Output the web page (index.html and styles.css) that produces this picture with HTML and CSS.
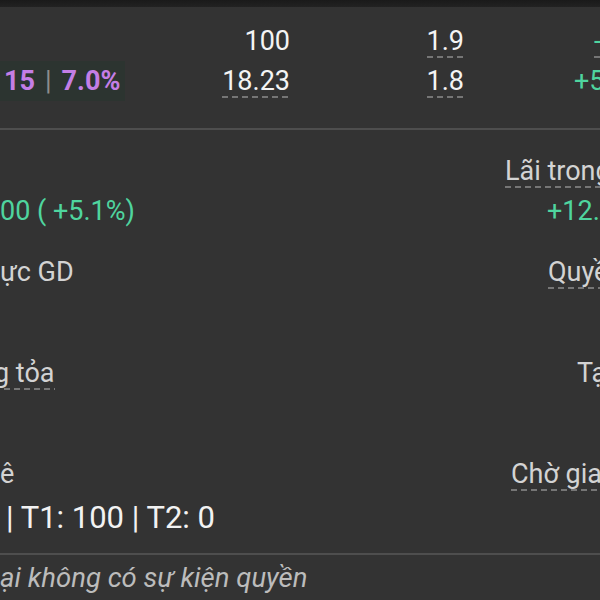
FILE: index.html
```html
<!DOCTYPE html>
<html lang="vi">
<head>
<meta charset="utf-8">
<title>Quote</title>
<link rel="stylesheet" href="styles.css">
</head>
<body>
<div class="statusbar"></div>
<section class="quote">
  <div class="cell"></div>
  <div class="cell num">100</div>
  <div class="cell num"><span class="dash">1.9</span></div>
  <div class="cell chg off-q1"><span class="dash">-</span></div>

  <div class="cell hl"><span>15</span><span class="bar">|</span><span>7.0%</span></div>
  <div class="cell num"><span class="dash">18.23</span></div>
  <div class="cell num"><span class="dash">1.8</span></div>
  <div class="cell chg off-q2">+5.2%</div>
</section>

<section class="stats">
  <div class="stat">
    <div class="lbl"></div>
    <div class="lbl off-lai"><span class="dash">Lãi trong ngày</span></div>
    <div class="val green">00 ( +5.1%)</div>
    <div class="val green off-pnl">+12.000</div>
  </div>
  <div class="stat">
    <div class="lbl">ực GD</div>
    <div class="lbl off-quyen"><span class="dash">Quyền</span></div>
    <div class="val"></div>
    <div class="val"></div>
  </div>
  <div class="stat">
    <div class="lbl cut"><span class="dash">g tỏa</span></div>
    <div class="lbl off-tam">Tạm giữ</div>
    <div class="val"></div>
    <div class="val"></div>
  </div>
  <div class="stat last">
    <div class="lbl">ê</div>
    <div class="lbl off-cho"><span class="dash">Chờ giao</span></div>
    <div class="val big">| T1: 100 | T2: 0</div>
    <div class="val"></div>
  </div>
</section>

<p class="note">ại không có sự kiện quyền</p>
</body>
</html>
```

FILE: styles.css
```css
html, body {
  margin: 0;
  padding: 0;
  overflow: hidden;
}

body {
  width: 600px;
  height: 600px;
  background: #333333;
  color: #f2f2f2;
  font-family: Roboto, "Noto Sans", sans-serif;
}

.statusbar {
  height: 7px;
  background: linear-gradient(#1a1a1a, #222222);
}

.quote {
  display: grid;
  grid-template-columns: 125px 165px 174px 136px;
  grid-auto-rows: 40px;
  padding: 14px 0 27px;
  border-bottom: 2px solid #4e4e4e;
  font-size: 27px;
  line-height: 40px;
  white-space: nowrap;
}

.num {
  text-align: right;
  color: #f4f4f4;
}

.chg {
  color: #4fd59f;
}

.off-q1 { padding-left: 130px; }
.off-q2 { padding-left: 110px; }

.hl {
  background: #2c3430;
  padding-left: 4px;
  color: #c47ee6;
  font-weight: 700;
}

.bar {
  font-weight: 400;
  color: #8d8d8d;
  margin: 0 10px;
}

.dash {
  display: inline-block;
  line-height: 33px;
  background: repeating-linear-gradient(90deg, #767676 0 6px, transparent 6px 10px) left bottom / 100% 2px no-repeat;
}

.stats {
  padding-top: 21px;
  border-bottom: 2px solid #4e4e4e;
}

.stat {
  display: grid;
  grid-template-columns: 1fr 120px;
  grid-template-rows: 40px 41px;
  padding-bottom: 20px;
  font-size: 27px;
  white-space: nowrap;
}

.stat.last {
  grid-template-rows: 40px 48px;
  padding-bottom: 11px;
}

.lbl {
  line-height: 40px;
  color: #d3d3d3;
}

.lbl.cut {
  margin-left: -6px;
}

.val {
  line-height: 41px;
  color: #f2f2f2;
}

.val.big {
  font-size: 31px;
  line-height: 48px;
  padding-left: 6px;
}

.green { color: #4fd59f; }

.off-lai { padding-left: 25px; }
.off-pnl { padding-left: 67px; }
.off-quyen { padding-left: 68px; }
.off-tam { padding-left: 97px; }
.off-cho { padding-left: 31px; }

.note {
  margin: 0;
  padding-top: 3px;
  font-size: 27.5px;
  line-height: 40px;
  font-style: italic;
  color: #bcbcbc;
  white-space: nowrap;
}
```
